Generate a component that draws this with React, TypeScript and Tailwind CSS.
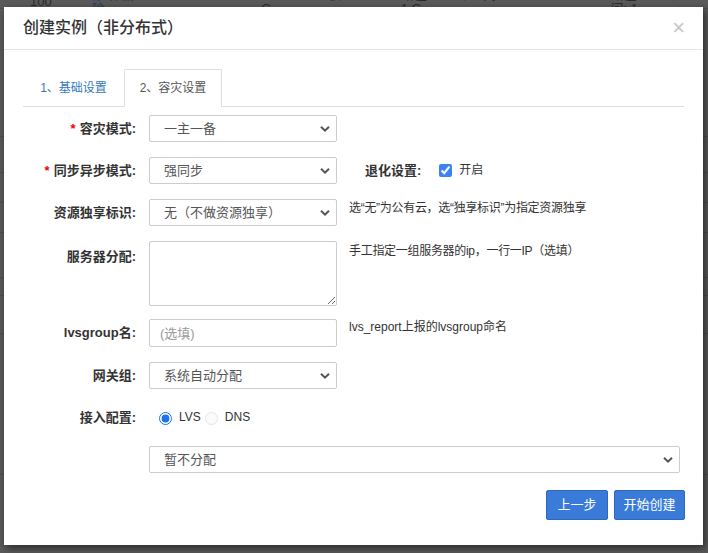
import React from 'react';

const font = "font-['Liberation_Sans','Noto_Sans_CJK_SC',sans-serif]";

const Chevron = () => (
    <svg className="pointer-events-none absolute right-[7px] top-1/2 -translate-y-1/2" width="10" height="7" viewBox="0 0 10 7">
        <path d="M1 1.2 L5 5.2 L9 1.2" fill="none" stroke="#555" strokeWidth="2" />
    </svg>
);

const Select = ({ value, w = 'w-[188px]' }: { value: string; w?: string }) => (
    <div className={`relative ${w} h-[27px] shrink-0`}>
        <select
            defaultValue={value}
            className={`${font} h-full w-full appearance-none rounded-[2px] border border-[#ccc] bg-white pl-[14px] text-[13px] text-[#555] outline-none`}
        >
            <option>{value}</option>
        </select>
        <Chevron />
    </div>
);

const Label = ({ text, required }: { text: string; required?: boolean }) => (
    <div className="w-[114px] shrink-0 pr-[1px] text-right text-[13px] leading-[18px] font-bold text-[#333]">
        {required && <span className="mr-[4px] text-[#e00]">*</span>}
        {text}
    </div>
);

const bgRows = [128, 36, 30, 30, 45, 18, 38, 141, 80];

export default function App() {
    return (
        <div className={`${font} relative h-[553px] w-[708px] overflow-hidden bg-[#5a5a5a]`}>
            {/* dimmed page behind */}
            <div className="-mt-[5px] flex h-[14px] items-center gap-[40px] border-b border-[#4f4f4f] pl-[30px] text-[13px] leading-[14px] text-[#2a2a2a]">
                <span>100</span>
                <span className="text-[#2b3f5a]">修改 删除</span>
                <span className="ml-[80px]">PROXY&nbsp;&nbsp;&nbsp;1 核&nbsp;&nbsp;&nbsp;1 G</span>
                <span>路径: /data, 空间: 1 G</span>
                <span className="ml-[60px]">路径: /data, 空间: 1</span>
            </div>
            {bgRows.map((h, i) => (
                <div key={i} className="border-b border-[#4e4e4e]" style={{ height: h }} />
            ))}

            {/* modal */}
            <div className="absolute left-[4px] top-[7px] h-[538px] w-[699px] bg-white shadow-[2px_3px_8px_rgba(0,0,0,0.55)]">
                <div className="flex h-[43px] items-center justify-between border-b border-[#e5e5e5] pl-[19px] pr-[18px]">
                    <h4 className="text-[16px] font-medium text-[#333]">创建实例（非分布式）</h4>
                    <span className="text-[22px] leading-none font-light text-[#c4c4c4]">×</span>
                </div>

                <div className="px-[19px] pt-[19px]">
                    {/* tabs */}
                    <div className="flex h-[38px] border-b border-[#ddd] text-[12px]">
                        <div className="flex w-[101px] items-center justify-center text-[#337ab7]">1、基础设置</div>
                        <div className="-mb-px flex w-[98px] items-center justify-center rounded-t-[2px] border border-b-white border-[#ddd] bg-white text-[#555]">2、容灾设置</div>
                    </div>

                    <div className="pt-[8px]">
                        <div className="mb-[15px] flex items-center gap-[12px]">
                            <Label text="容灾模式:" required />
                            <Select value="一主一备" />
                        </div>
                        <div className="mb-[15px] flex items-center gap-[12px]">
                            <Label text="同步异步模式:" required />
                            <Select value="强同步" />
                            <span className="ml-[16px] whitespace-nowrap text-[13px] leading-[18px] font-bold text-[#333]">退化设置:</span>
                            <label className="ml-[6px] flex items-center gap-[7px] text-[12px] text-[#333]">
                                <input type="checkbox" defaultChecked className="m-0 h-[13px] w-[13px] accent-[#3b82f6]" />
                                <span className="-mt-[1px]">开启</span>
                            </label>
                        </div>
                        <div className="mb-[15px] flex items-center gap-[12px]">
                            <Label text="资源独享标识:" />
                            <Select value="无（不做资源独享）" />
                            <span className="-mt-[10px] whitespace-nowrap text-[12px] tracking-[-0.3px] text-[#333]">选“无”为公有云，选“独享标识”为指定资源独享</span>
                        </div>
                        <div className="mb-[13px] flex items-start gap-[12px]">
                            <div className="pt-[7px]">
                                <Label text="服务器分配:" />
                            </div>
                            <textarea className="h-[65px] w-[188px] shrink-0 rounded-[2px] border border-[#ccc] outline-none" />
                            <span className="pt-[1px] whitespace-nowrap text-[12px] tracking-[-0.3px] text-[#333]">手工指定一组服务器的ip，一行一IP（选填）</span>
                        </div>
                        <div className="mb-[15px] flex items-center gap-[12px]">
                            <Label text="lvsgroup名:" />
                            <input
                                placeholder="(选填)"
                                className={`${font} h-[28px] w-[188px] shrink-0 rounded-[2px] border border-[#ccc] px-[10px] text-[13px] outline-none placeholder:text-[#999]`}
                            />
                            <span className="-mt-[12px] whitespace-nowrap text-[12px] text-[#333]">lvs_report上报的lvsgroup命名</span>
                        </div>
                        <div className="mb-[15px] flex items-center gap-[12px]">
                            <Label text="网关组:" />
                            <Select value="系统自动分配" />
                        </div>
                        <div className="mb-[14px] flex h-[28px] items-center gap-[12px]">
                            <Label text="接入配置:" />
                            <div className="flex items-center text-[12px] text-[#333]">
                                <input type="radio" name="acc" defaultChecked className="ml-[10px] mr-[7px] h-[13px] w-[13px] accent-[#1a73e8]" />
                                <span className="-mt-[3px]">LVS</span>
                                <input type="radio" name="acc" disabled className="ml-[4px] mr-[7px] h-[13px] w-[13px] opacity-50" />
                                <span className="-mt-[3px]">DNS</span>
                            </div>
                        </div>
                        <div className="mb-[17px] flex">
                            <div className="w-[126px] shrink-0" />
                            <Select value="暂不分配" w="w-[531px]" />
                        </div>
                        <div className="flex justify-end gap-[6px]">
                            <button className="h-[30px] w-[62px] rounded-[2px] border border-[#2e68bd] bg-[#3a7bd9] text-[13px] text-white">上一步</button>
                            <button className="mr-[-1px] h-[30px] w-[71px] rounded-[2px] border border-[#2e68bd] bg-[#3a7bd9] text-[13px] text-white">开始创建</button>
                        </div>
                    </div>
                </div>
            </div>
        </div>
    );
}
